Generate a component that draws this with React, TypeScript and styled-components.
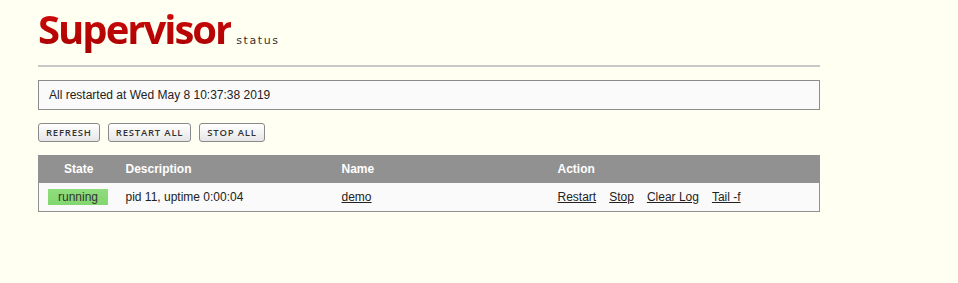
import React from "react";
import styled, { createGlobalStyle } from "styled-components";

const GlobalStyle = createGlobalStyle`
  body {
    margin: 0;
    background: #fffff2;
    font-family: "Liberation Sans", Arial, sans-serif;
    color: #222;
  }
`;

const Page = styled.div`
  width: 782px;
  padding: 0 38px;
`;

const Header = styled.header`
  display: flex;
  align-items: baseline;
  gap: 5px;
  height: 67px;
  border-bottom: 2px solid #c8c8c8;
  box-sizing: border-box;
  padding-top: 5px;
`;

const Logo = styled.h1`
  margin: 0;
  font-family: "Open Sans", sans-serif;
  font-weight: 700;
  font-size: 40px;
  letter-spacing: -2px;
  line-height: 48px;
  background: linear-gradient(#d40c0c, #a60000);
  -webkit-background-clip: text;
  background-clip: text;
  color: transparent;
`;

const Tagline = styled.span`
  font-family: "DejaVu Sans", sans-serif;
  font-size: 11px;
  letter-spacing: 1.6px;
  color: #333;
`;

const Message = styled.div`
  margin-top: 13px;
  height: 30px;
  box-sizing: border-box;
  border: 1px solid #8c8c8c;
  background: #fafafa;
  padding: 0 10px;
  display: flex;
  align-items: center;
  font-size: 12px;
`;

const Toolbar = styled.div`
  display: flex;
  gap: 8px;
  margin-top: 13px;
`;

const Button = styled.button`
  height: 19px;
  padding: 0 7px;
  border: 1px solid #8a8a8a;
  border-radius: 3px;
  background: linear-gradient(#ffffff, #e6e6e6);
  font-family: "Open Sans", sans-serif;
  font-size: 9.5px;
  font-weight: 600;
  letter-spacing: 0.8px;
  color: #333;
  text-transform: uppercase;
  cursor: pointer;
`;

const Table = styled.table`
  margin-top: 13px;
  width: 100%;
  border-collapse: collapse;
  border: 1px solid #919191;
  font-size: 12px;
`;

const HeadCell = styled.th<{ $center?: boolean; $width?: number }>`
  background: #919191;
  color: #fff;
  font-weight: 700;
  height: 27px;
  padding: 0 7px;
  text-align: ${(p) => (p.$center ? "center" : "left")};
  width: ${(p) => (p.$width ? `${p.$width}px` : "auto")};
  box-sizing: border-box;
`;

const Cell = styled.td`
  background: #fafafa;
  height: 28px;
  padding: 0 7px;
`;

const Badge = styled.span`
  display: inline-block;
  width: 60px;
  height: 16px;
  line-height: 16px;
  background: linear-gradient(#8fdd7e, #82d66f);
  color: #333;
  text-align: center;
  margin-left: 2px;
`;

const Link = styled.a`
  color: #222;
  text-decoration: underline;
  cursor: pointer;
`;

const Actions = styled.div`
  display: flex;
  gap: 13px;
`;

export default function App() {
  return (
    <Page>
      <GlobalStyle />
      <Header>
        <Logo>Supervisor</Logo>
        <Tagline>status</Tagline>
      </Header>
      <Message>All restarted at Wed May 8 10:37:38 2019</Message>
      <Toolbar>
        <Button>Refresh</Button>
        <Button>Restart All</Button>
        <Button>Stop All</Button>
      </Toolbar>
      <Table>
        <thead>
          <tr>
            <HeadCell $center $width={80}>State</HeadCell>
            <HeadCell $width={216}>Description</HeadCell>
            <HeadCell $width={216}>Name</HeadCell>
            <HeadCell>Action</HeadCell>
          </tr>
        </thead>
        <tbody>
          <tr>
            <Cell>
              <Badge>running</Badge>
            </Cell>
            <Cell>pid 11, uptime 0:00:04</Cell>
            <Cell>
              <Link>demo</Link>
            </Cell>
            <Cell>
              <Actions>
                <Link>Restart</Link>
                <Link>Stop</Link>
                <Link>Clear Log</Link>
                <Link>Tail -f</Link>
              </Actions>
            </Cell>
          </tr>
        </tbody>
      </Table>
    </Page>
  );
}
